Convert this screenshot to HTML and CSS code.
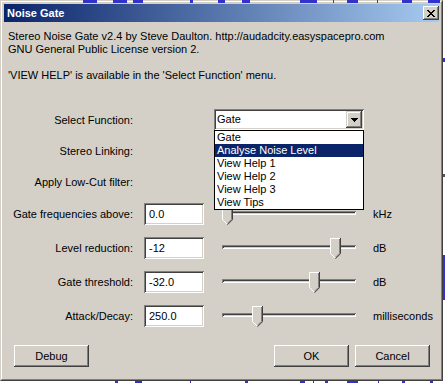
FILE: index.html
```html
<!DOCTYPE html>
<html>
<head>
<meta charset="utf-8">
<title>Noise Gate</title>
<link rel="stylesheet" href="styles.css">
</head>
<body>
<div class="top-bits"></div>
<div class="window">
  <div class="window-inner">
    <div class="titlebar">
      <span class="title">Noise Gate</span>
      <div class="close-btn">
        <svg width="8" height="7" viewBox="0 0 8 7"><path fill="#000" d="M0 0h2v1H0zM6 0h2v1H6zM1 1h2v1H1zM5 1h2v1H5zM2 2h4v1H2zM3 3h2v1H3zM2 4h4v1H2zM1 5h2v1H1zM5 5h2v1H5zM0 6h2v1H0zM6 6h2v1H6z"/></svg>
      </div>
    </div>
    <div class="content">
      <p class="intro">Stereo Noise Gate v2.4 by Steve Daulton. http://audadcity.easyspacepro.com<br>GNU General Public License version 2.<br><br>'VIEW HELP' is available in the 'Select Function' menu.</p>

      <div class="form">
        <div class="row r1">
          <div class="label">Select Function:</div>
          <div class="empty"></div>
          <div class="combo-wrap">
            <div class="combo">
              <span class="combo-text">Gate</span>
              <div class="combo-arrow">
                <svg width="7" height="4" viewBox="0 0 7 4"><path fill="#000" d="M0 0h7v1H0zM1 1h5v1H1zM2 2h3v1H2zM3 3h1v1H3z"/></svg>
              </div>
            </div>
            <ul class="droplist">
              <li>Gate</li>
              <li class="sel">Analyse Noise Level</li>
              <li>View Help 1</li>
              <li>View Help 2</li>
              <li>View Help 3</li>
              <li>View Tips</li>
            </ul>
          </div>
        </div>
        <div class="row r2">
          <div class="label">Stereo Linking:</div>
        </div>
        <div class="row r3">
          <div class="label">Apply Low-Cut filter:</div>
        </div>
        <div class="row r4">
          <div class="label">Gate frequencies above:</div>
          <div class="field">0.0</div>
          <div class="slider">
            <div class="track"></div>
            <svg class="thumb" style="left:8px" width="11" height="21" viewBox="0 0 11 21"><path d="M0 0H11V15.5L5.5 21L0 15.5Z" fill="#d4d0c8"/><path d="M0.5 15.5V0.5H10" stroke="#fff" fill="none"/><path d="M10.5 0V15.7L5.5 20.7" stroke="#404040" fill="none"/><path d="M9.5 1V15.3L5.5 19.3" stroke="#808080" fill="none"/><path d="M0.5 15.5L5 20" stroke="#fff" fill="none"/></svg>
          </div>
          <div class="unit">kHz</div>
        </div>
        <div class="row r5">
          <div class="label">Level reduction:</div>
          <div class="field">-12</div>
          <div class="slider">
            <div class="track"></div>
            <svg class="thumb" style="left:116px" width="11" height="21" viewBox="0 0 11 21"><path d="M0 0H11V15.5L5.5 21L0 15.5Z" fill="#d4d0c8"/><path d="M0.5 15.5V0.5H10" stroke="#fff" fill="none"/><path d="M10.5 0V15.7L5.5 20.7" stroke="#404040" fill="none"/><path d="M9.5 1V15.3L5.5 19.3" stroke="#808080" fill="none"/><path d="M0.5 15.5L5 20" stroke="#fff" fill="none"/></svg>
          </div>
          <div class="unit">dB</div>
        </div>
        <div class="row r6">
          <div class="label">Gate threshold:</div>
          <div class="field">-32.0</div>
          <div class="slider">
            <div class="track"></div>
            <svg class="thumb" style="left:95px" width="11" height="21" viewBox="0 0 11 21"><path d="M0 0H11V15.5L5.5 21L0 15.5Z" fill="#d4d0c8"/><path d="M0.5 15.5V0.5H10" stroke="#fff" fill="none"/><path d="M10.5 0V15.7L5.5 20.7" stroke="#404040" fill="none"/><path d="M9.5 1V15.3L5.5 19.3" stroke="#808080" fill="none"/><path d="M0.5 15.5L5 20" stroke="#fff" fill="none"/></svg>
          </div>
          <div class="unit">dB</div>
        </div>
        <div class="row r7">
          <div class="label">Attack/Decay:</div>
          <div class="field">250.0</div>
          <div class="slider">
            <div class="track"></div>
            <svg class="thumb" style="left:38px" width="11" height="21" viewBox="0 0 11 21"><path d="M0 0H11V15.5L5.5 21L0 15.5Z" fill="#d4d0c8"/><path d="M0.5 15.5V0.5H10" stroke="#fff" fill="none"/><path d="M10.5 0V15.7L5.5 20.7" stroke="#404040" fill="none"/><path d="M9.5 1V15.3L5.5 19.3" stroke="#808080" fill="none"/><path d="M0.5 15.5L5 20" stroke="#fff" fill="none"/></svg>
          </div>
          <div class="unit">milliseconds</div>
        </div>
      </div>

      <div class="buttons">
        <div class="btn">Debug</div>
        <div class="btn-group">
          <div class="btn">OK</div>
          <div class="btn">Cancel</div>
        </div>
      </div>
    </div>
  </div>
</div>
</body>
</html>
```
FILE: styles.css
```css
* { box-sizing: border-box; }
html, body { margin: 0; padding: 0; }
body {
  position: relative;
  width: 445px;
  height: 383px;
  overflow: hidden;
  font-family: "Liberation Sans", Arial, sans-serif;
  font-size: 11px;
  color: #000;
  background:
    linear-gradient(to right,
      transparent 115px, #3333cc 115px 118px,
      transparent 118px 135px, #3333cc 135px 142px,
      transparent 142px 190px, #3333cc 190px 191px,
      transparent 191px 245px, #3333cc 245px 248px,
      transparent 248px 300px, #3333cc 300px 305px,
      transparent 305px 313px, #3333cc 313px 314px,
      transparent 314px 325px, #3333cc 325px 328px,
      transparent 328px 347px, #3333cc 347px 358px,
      transparent 358px 378px, #3333cc 378px 379px,
      transparent 379px 402px, #3333cc 402px 405px,
      transparent 405px 430px, #3333cc 430px 433px,
      transparent 433px) left bottom / 100% 2px no-repeat,
    linear-gradient(to bottom,
      transparent 58px, #3333cc 58px 62px,
      transparent 62px 174px, #555 174px 177px,
      transparent 177px 255px, #3333cc 255px 300px,
      transparent 300px) right top / 2px 100% no-repeat,
    #fff;
}
.top-bits {
  position: absolute;
  top: 0;
  left: 0;
  width: 445px;
  height: 3px;
  z-index: 10;
  background: linear-gradient(to right,
      transparent 83px, #3333cc 83px 97px,
      transparent 97px 113px, #3333cc 113px 127px,
      transparent 127px 133px, #3333cc 133px 143px,
      transparent 143px 190px, #3333cc 190px 193px,
      transparent 193px 218px, #3333cc 218px 225px,
      transparent 225px 242px, #3333cc 242px 250px,
      transparent 250px 300px, #3333cc 300px 317px,
      transparent 317px 333px, #3333cc 333px 334px,
      transparent 334px 347px, #3333cc 347px 358px,
      transparent 358px 377px, #3333cc 377px 378px,
      transparent 378px 402px, #3333cc 402px 412px,
      transparent 412px 428px, #3333cc 428px 440px,
      transparent 440px);
}
.window {
  width: 443px;
  height: 381px;
  background: #d4d0c8;
  border: 1px solid;
  border-color: #d4d0c8 #404040 #404040 #d4d0c8;
}
.window-inner {
  height: 100%;
  border: 1px solid;
  border-color: #fff #808080 #808080 #fff;
  padding: 2px;
  display: flex;
  flex-direction: column;
}
.titlebar {
  height: 18px;
  flex: none;
  background: linear-gradient(to right, #0a246a, #a6caf0);
  display: flex;
  align-items: center;
  justify-content: space-between;
  padding: 0 0 0 3px;
}
.title {
  color: #fff;
  font-weight: bold;
  font-size: 11px;
}
.close-btn {
  width: 16px;
  height: 14px;
  background: #d4d0c8;
  box-shadow: inset -1px -1px #404040, inset 1px 1px #fff, inset -2px -2px #808080, inset 2px 2px #d4d0c8;
  display: flex;
  align-items: center;
  justify-content: center;
  padding-right: 1px;
}
.close-btn svg { display: block; }
.content {
  flex: 1;
  padding: 8px 4px 0 4px;
  display: flex;
  flex-direction: column;
}
.intro {
  margin: 0;
  line-height: 13px;
}
.form {
  margin-top: 27px;
}
.row {
  display: grid;
  grid-template-columns: 126px 60px 150px 1fr;
  column-gap: 10px;
  height: 21px;
}
.r1, .r2 { margin-bottom: 10px; }
.r3 { margin-bottom: 11px; }
.r4, .r5, .r6 { margin-bottom: 13px; }
.label {
  text-align: right;
  padding-right: 1px;
  line-height: 21px;
  padding-top: 1px;
  white-space: nowrap;
}
.field {
  background: #fff;
  box-shadow: inset 1px 1px #808080, inset -1px -1px #fff, inset 2px 2px #404040, inset -2px -2px #d4d0c8;
  padding: 1px 0 0 5px;
  line-height: 20px;
}
.combo-wrap {
  grid-column: 3;
  position: relative;
}
.combo {
  height: 21px;
  background: #fff;
  box-shadow: inset 1px 1px #808080, inset -1px -1px #fff, inset 2px 2px #404040, inset -2px -2px #d4d0c8;
  display: flex;
  align-items: stretch;
  padding: 2px;
}
.combo-text {
  flex: 1;
  padding-left: 1px;
  line-height: 17px;
}
.combo-arrow {
  width: 16px;
  background: #d4d0c8;
  box-shadow: inset -1px -1px #404040, inset 1px 1px #d4d0c8, inset -2px -2px #808080, inset 2px 2px #fff;
  display: flex;
  align-items: center;
  justify-content: center;
}
.combo-arrow svg { display: block; }
.droplist {
  position: absolute;
  top: 21px;
  left: 0;
  width: 150px;
  margin: 0;
  padding: 0;
  list-style: none;
  background: #fff;
  border: 1px solid #000;
  z-index: 5;
}
.droplist li {
  height: 13px;
  line-height: 13px;
  padding-left: 2px;
  white-space: nowrap;
}
.droplist li.sel {
  background: #0a246a;
  color: #fff;
}
.slider {
  position: relative;
  padding: 8px 8px 0 8px;
}
.track {
  height: 4px;
  box-shadow: inset 1px 1px #808080, inset -1px -1px #fff, inset 2px 2px #404040, inset -2px -2px #d4d0c8;
}
.thumb {
  position: absolute;
  top: 1px;
  display: block;
}
.unit {
  line-height: 21px;
  padding-top: 1px;
  margin-left: -1px;
  white-space: nowrap;
}
.buttons {
  margin-top: 19px;
  display: flex;
  justify-content: space-between;
  padding: 0 5px 0 6px;
}
.btn-group {
  display: flex;
  gap: 6px;
}
.btn {
  width: 75px;
  height: 22px;
  background: #d4d0c8;
  box-shadow: inset -1px -1px #404040, inset 1px 1px #fff, inset -2px -2px #808080, inset 2px 2px #d4d0c8;
  text-align: center;
  line-height: 22px;
}
```
